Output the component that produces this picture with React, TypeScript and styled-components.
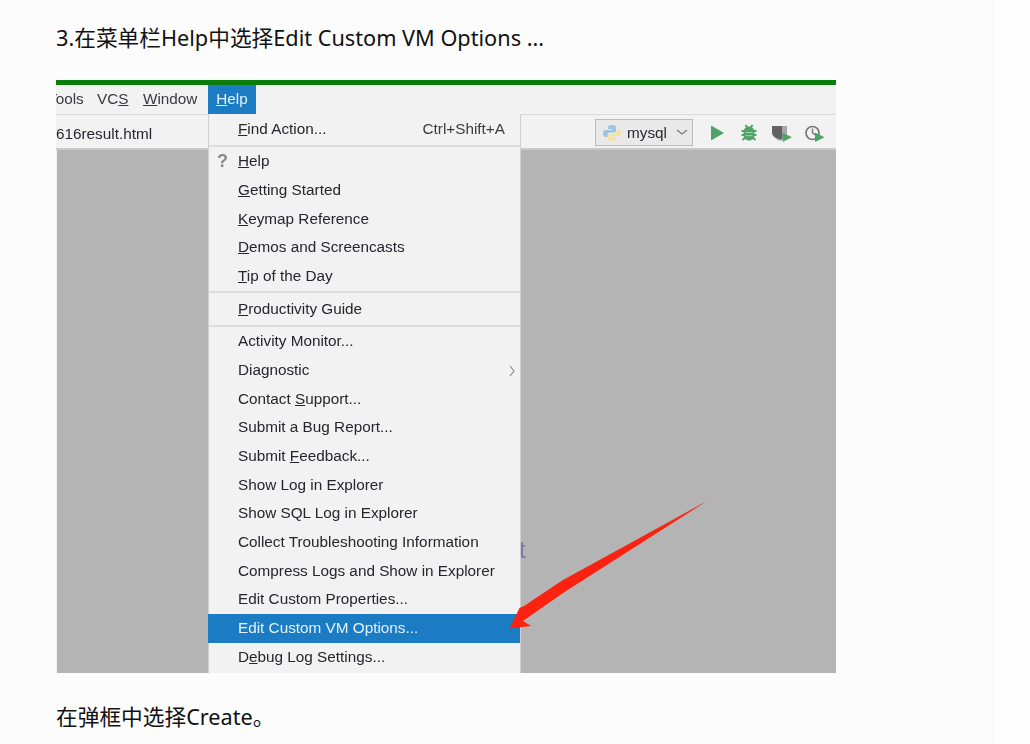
import React from "react";
import styled, { createGlobalStyle } from "styled-components";

const Global = createGlobalStyle`
  html, body { margin: 0; padding: 0; background: #fcfcfc; }
  #root { height: 744px; overflow: hidden; }
`;

const Page = styled.div`
  display: flex;
  height: 744px;
  background: #fcfcfc;
`;
const Article = styled.main`
  width: 993px;
  box-sizing: border-box;
  padding: 23px 0 0 56px;
  display: flex;
  flex-direction: column;
  font-family: "Noto Sans", "Noto Sans CJK SC", sans-serif;
  color: #111;
`;
const Rail = styled.aside`
  flex: 1;
  border-left: 1px solid #f3f3f3;
  background: #fdfdfd;
`;
const Para = styled.p<{ $gap: number }>`
  margin: 0 0 ${(p) => p.$gap}px;
  font-size: 21.7px;
  line-height: 30px;
  height: 30px;
  white-space: nowrap;
`;
const Shot = styled.figure`
  position: relative;
  margin: 0 0 29px;
  width: 780px;
  height: 593px;
  overflow: hidden;
  background: #f2f2f2;
  font-family: "Liberation Sans", Arial, sans-serif;
  color: #26262c;
  font-size: 15.3px;
  display: flex;
  flex-direction: column;
  filter: blur(0.4px);
`;
const GreenBar = styled.div`
  height: 5px;
  background: #0a7d0a;
`;
const MenuBar = styled.div`
  height: 30px;
  box-sizing: border-box;
  display: flex;
  align-items: stretch;
  border-bottom: 1px solid #dadada;
`;
const BarItem = styled.div<{ $active?: boolean; $w: number }>`
  flex: 0 0 auto;
  width: ${(p) => p.$w}px;
  box-sizing: border-box;
  padding-bottom: 2px;
  display: flex;
  align-items: center;
  justify-content: ${(p) => (p.$active ? "center" : "flex-start")};
  overflow: hidden;
  white-space: pre;
  background: ${(p) => (p.$active ? "#1b7cc4" : "transparent")};
  color: ${(p) => (p.$active ? "#e4f1fa" : "#3a3a40")};
`;
const ClippedLabel = styled.span`
  margin-left: -8px;
`;
const Toolbar = styled.div`
  height: 35px;
  box-sizing: border-box;
  display: flex;
  align-items: center;
  border-bottom: 2px solid #c9c9c9;
  padding-right: 11px;
`;
const FileName = styled.span`
  margin-top: 5px;
  margin-right: auto;
`;
const RunSelect = styled.div`
  width: 98px;
  height: 27px;
  margin-top: 2px;
  margin-right: 17px;
  box-sizing: border-box;
  border: 1px solid #bcbcbc;
  background: #e9e9e9;
  display: flex;
  align-items: center;
  padding-left: 6px;
  gap: 5px;
  color: #2a2a34;
`;
const Chevron = styled.svg`
  margin-left: 4px;
`;
const ToolIcons = styled.div`
  display: flex;
  align-items: center;
  gap: 12px;
  margin-top: 2px;
`;
const Canvas = styled.div`
  flex: 1;
  margin-left: 1px;
  background: #b4b4b4;
  position: relative;
`;
const GhostLetter = styled.span`
  position: absolute;
  left: 462px;
  top: 386px;
  font-size: 24px;
  color: #7878a8;
`;
const Menu = styled.div`
  position: absolute;
  left: 152px;
  top: 34px;
  width: 313px;
  height: 560px;
  box-sizing: border-box;
  background: #f2f2f2;
  border-left: 1px solid #cfcfcf;
  border-right: 1px solid #cfcfcf;
  display: flex;
  flex-direction: column;
`;
const Row = styled.div<{ $active?: boolean; $h?: number }>`
  height: ${(p) => p.$h ?? 28.7}px;
  flex: 0 0 auto;
  position: relative;
  box-sizing: border-box;
  margin-left: ${(p) => (p.$active ? "-1px" : "0")};
  padding: 0 24px 0 ${(p) => (p.$active ? 30 : 29)}px;
  display: flex;
  align-items: center;
  justify-content: space-between;
  white-space: pre;
  background: ${(p) => (p.$active ? "#1b7cc4" : "transparent")};
  color: ${(p) => (p.$active ? "#e4f1fa" : "inherit")};
`;
const TopRow = styled(Row)`
  padding-bottom: 1px;
`;
const Divider = styled.div<{ $before?: number }>`
  height: 2px;
  margin-top: ${(p) => p.$before ?? 0}px;
  flex: 0 0 auto;
  background: #dcdcdc;
`;
const Shortcut = styled.span`
  color: #3c3c42;
  margin-right: -9px;
`;
const Mark = styled.span`
  position: absolute;
  left: 8px;
  top: 4px;
  font-size: 18px;
  font-weight: 700;
  color: #8a8a8a;
`;
const Caret = styled.svg`
  position: absolute;
  right: 4px;
  top: 9px;
`;
const Arrow = styled.svg`
  position: absolute;
  left: 449px;
  top: 418px;
`;

const Python = () => (
  <svg width="20" height="20" viewBox="0 0 20 20">
    <path d="M10 2c-3 0-4 1-4 2.500V6h4.500v1H4c-2 0-3 1.500-3 3.500S2 14 4 14h1.500v-2c0-1.500 1-2.500 2.500-2.500h4c1.200 0 2-.8 2-2V4.500C14 3 13 2 10 2z" fill="#9cc3e2" />
    <path d="M10 18c3 0 4-1 4-2.500V14H9.500v-1H16c2 0 3-1.500 3-3.500S18 6 16 6h-1.500v2c0 1.500-1 2.500-2.500 2.500H8c-1.200 0-2 .8-2 2v3C6 17 7 18 10 18z" fill="#f2e2a4" />
  </svg>
);
const Play = () => (
  <svg width="17" height="16" viewBox="0 0 17 16"><path d="M1 0.500l13 7.500-13 7.500z" fill="#4ea467" /></svg>
);
const Bug = () => (
  <svg width="20" height="19" viewBox="0 0 20 19">
    <path d="M6.500 2l2 3M13.500 2l-2 3M2.500 8h3M14.500 8h3M2.500 12h3M14.500 12h3M3.500 17l3-2.500M16.500 17l-3-2.500" stroke="#4ea467" strokeWidth="2" fill="none" />
    <path d="M10 3.500c3.500 0 5.500 2.500 5.500 6.500v2c0 3-2.500 5.500-5.500 5.500S4.500 15 4.500 12v-2c0-4 2-6.500 5.500-6.500z" fill="#4ea467" />
    <path d="M6.500 9.500h7M6.500 12.700h7" stroke="#a9d2b6" strokeWidth="1" />
  </svg>
);
const Cover = () => (
  <svg width="22" height="18" viewBox="0 0 22 18">
    <path d="M1 2h15v6c0 4-3 6.500-7.500 9C4 14.500 1 12 1 8z" fill="#a8a8a8" />
    <path d="M1 2h10v13.800C4 14 1 12 1 8z" fill="#626262" />
    <path d="M11.500 8.500l9.500 4.750L11.500 18z" fill="#4ea467" />
  </svg>
);
const Profile = () => (
  <svg width="20" height="18" viewBox="0 0 20 18">
    <circle cx="7.500" cy="9" r="6.500" fill="none" stroke="#777" strokeWidth="1.700" />
    <path d="M7.500 4.500V9l3 2" fill="none" stroke="#777" strokeWidth="1.400" />
    <path d="M10 8.500l9.500 4.750L10 18z" fill="#4ea467" />
  </svg>
);

export default function App() {
  return (
    <Page>
      <Global />
      <Article>
        <Para $gap={27}>3.在菜单栏Help中选择Edit Custom VM Options ...</Para>
        <Shot>
          <GreenBar />
          <MenuBar>
            <BarItem $w={41}><ClippedLabel>Tools</ClippedLabel></BarItem>
            <BarItem $w={46}>VC<u>S</u></BarItem>
            <BarItem $w={65}><u>W</u>indow</BarItem>
            <BarItem $w={48} $active><span><u>H</u>elp</span></BarItem>
          </MenuBar>
          <Toolbar>
            <FileName>616result.html</FileName>
            <RunSelect>
              <Python />
              <span>mysql</span>
              <Chevron width="12" height="7" viewBox="0 0 12 7"><path d="M1 1l5 4 5-4" fill="none" stroke="#777" strokeWidth="1.200" /></Chevron>
            </RunSelect>
            <ToolIcons>
              <Play />
              <Bug />
              <Cover />
              <Profile />
            </ToolIcons>
          </Toolbar>
          <Canvas><GhostLetter>t</GhostLetter></Canvas>
          <Menu>
            <TopRow $h={31}>
              <span><u>F</u>ind Action...</span>
              <Shortcut>Ctrl+Shift+A</Shortcut>
            </TopRow>
            <Divider />
            <Row><Mark>?</Mark><span><u>H</u>elp</span></Row>
            <Row><span><u>G</u>etting Started</span></Row>
            <Row><span><u>K</u>eymap Reference</span></Row>
            <Row><span><u>D</u>emos and Screencasts</span></Row>
            <Row><span><u>T</u>ip of the Day</span></Row>
            <Divider $before={1} />
            <Row $h={31.5}><span><u>P</u>roductivity Guide</span></Row>
            <Divider />
            <Row><span>Activity Monitor...</span></Row>
            <Row>
              <span>Diagnostic</span>
              <Caret width="8" height="12" viewBox="0 0 8 12"><path d="M2 1l4 5-4 5" fill="none" stroke="#8a8a8a" strokeWidth="1.200" /></Caret>
            </Row>
            <Row><span>Contact <u>S</u>upport...</span></Row>
            <Row><span>Submit a Bug Report...</span></Row>
            <Row><span>Submit <u>F</u>eedback...</span></Row>
            <Row><span>Show Log in Explorer</span></Row>
            <Row><span>Show SQL Log in Explorer</span></Row>
            <Row><span>Collect Troubleshooting Information</span></Row>
            <Row><span>Compress Logs and Show in Explorer</span></Row>
            <Row><span>Edit Custom Properties...</span></Row>
            <Row $active><span>Edit Custom VM Options...</span></Row>
            <Row><span>D<u>e</u>bug Log Settings...</span></Row>
          </Menu>
          <Arrow width="205" height="134" viewBox="505 498 205 134">
            <path d="M707 501L563 580L524 606L519.500 608L509.500 628.500L531 626L523 621L563 593Z" fill="#fb2212" />
          </Arrow>
        </Shot>
        <Para $gap={0}>在弹框中选择Create。</Para>
      </Article>
      <Rail />
    </Page>
  );
}
